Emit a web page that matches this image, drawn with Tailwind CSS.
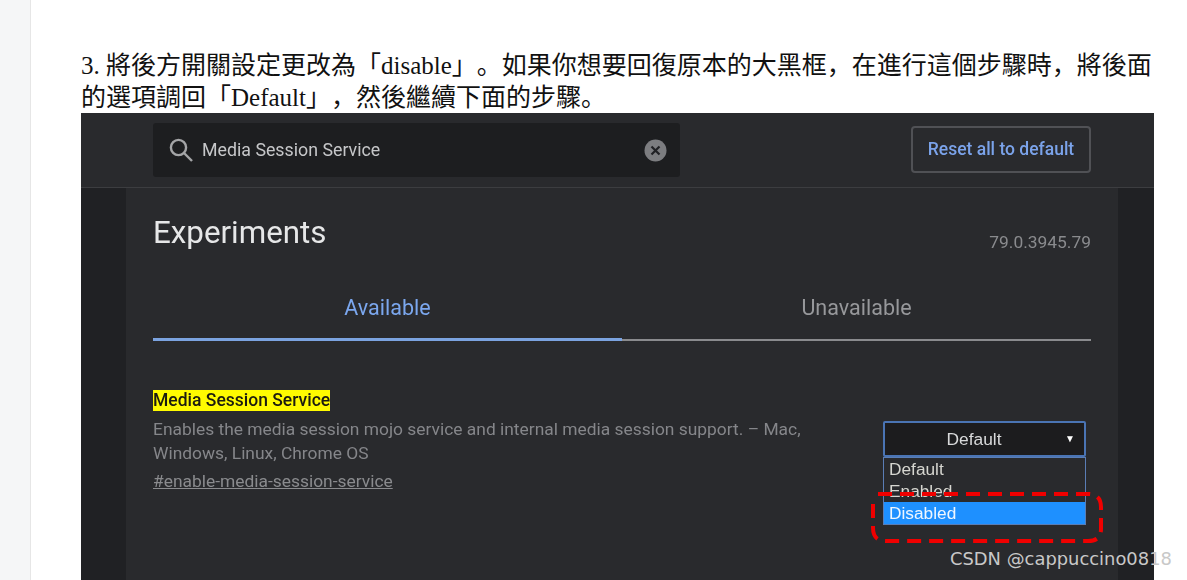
<!DOCTYPE html>
<html lang="zh-Hant">
<head>
<meta charset="utf-8">
<script src="https://cdn.jsdelivr.net/npm/@tailwindcss/browser@4"></script>
</head>
<body class="bg-white">
<div class="relative flex h-[580px] w-[1187px] overflow-hidden bg-white">
  <aside class="h-full w-[31px] shrink-0 border-r border-[#e6e6e6] bg-[#f5f6f7]"></aside>
  <main class="flex w-[1123px] flex-col pl-[50px] pt-[50px]">
    <p lang="zh-CN" class="whitespace-nowrap text-[25px] leading-[32px] text-[#111] [text-spacing-trim:space-all] [font-family:'Liberation_Serif','Noto_Sans_CJK_SC',serif]">3. 將後方開關設定更改為「disable」。如果你想要回復原本的大黑框，在進行這個步驟時，將後面<br>的選項調回「Default」，然後繼續下面的步驟。</p>
    <section class="-mt-[1px] flex h-[467px] w-[1073px] shrink-0 flex-col overflow-hidden bg-[#202124] [font-family:Roboto,sans-serif]">
      <div class="flex h-full flex-col blur-[0.6px]">
      <header class="flex h-[75px] shrink-0 items-center justify-between border-b border-[#3c3d40] bg-[#292a2d] pl-[72px] pr-[63px]">
        <div class="flex h-[54px] w-[527px] items-center rounded-[3px] bg-[#1d1e20] pl-[15px] pr-[13px]">
          <svg class="h-[26px] w-[26px] shrink-0" viewBox="0 0 26 26" fill="none" stroke="#a4a5a7" stroke-width="2.4"><circle cx="10.5" cy="10.5" r="7.6"/><path d="M16 16l8 8"/></svg>
          <span class="ml-[8px] text-[17.8px] text-[#c6c7c9]">Media Session Service</span>
          <svg class="ml-auto h-[23px] w-[23px]" viewBox="0 0 23 23"><circle cx="11.5" cy="11.5" r="11" fill="#7c7d80"/><path d="M7.5 7.5l8 8M15.5 7.5l-8 8" stroke="#202124" stroke-width="2.2"/></svg>
        </div>
        <button class="flex h-[47px] w-[180px] -translate-y-[1px] items-center justify-center rounded-[4px] border-2 border-[#505155] text-[17.5px] font-medium text-[#7ba3ea]">Reset all to default</button>
      </header>
      <div class="ml-[45px] mr-[36px] flex-1 bg-[#292a2d] pl-[27px] pr-[27px]">
        <div class="flex items-end justify-between pt-[26px]">
          <h1 class="text-[31.3px] leading-[38px] text-[#e6e7e8]">Experiments</h1>
          <span class="text-[17.4px] leading-[20px] text-[#8a8b8e]">79.0.3945.79</span>
        </div>
        <nav class="mt-[35px] flex w-[938px]">
          <div class="flex h-[54px] w-[469px] items-start justify-center border-b-[3px] border-[#7ba3e0] pt-[7px] text-[21.5px] leading-[28px] text-[#7ba7ee]">Available</div>
          <div class="flex h-[54px] w-[469px] items-start justify-center border-b-2 border-[#8a8b8e] pt-[7px] text-[21.5px] leading-[28px] text-[#97989b]">Unavailable</div>
        </nav>
        <div class="mt-[48px] flex w-[938px] justify-between">
          <div class="w-[680px]">
            <span class="inline-block h-[21px] bg-[#fffb00] text-[17.5px] leading-[21px] font-medium text-[#1c1c10]">Media Session Service</span>
            <p class="mt-[4px] text-[17.4px] leading-[24px] text-[#85868a]">Enables the media session mojo service and internal media session support. – Mac,<br>Windows, Linux, Chrome OS</p>
            <a class="mt-[4px] block text-[17.4px] leading-[24px] text-[#8a8b8e] underline">#enable-media-session-service</a>
          </div>
          <div class="mr-[5px] mt-[32px] w-[203px] [font-family:'Liberation_Sans',sans-serif]">
            <div class="relative flex h-[36px] items-center justify-center rounded-[2px] border-2 border-[#4a74b4] bg-[#1c1c1e] pr-[21px] text-[17.4px] text-[#d8d9da]">Default<span class="absolute right-[9px] top-[8px] text-[10px] text-white">▼</span></div>
            <ul class="border border-[#5a7db5] bg-[#292a2d] text-[17.3px] leading-[22px] text-[#d6d6d0]">
              <li class="h-[22px] pl-[5px]">Default</li>
              <li class="h-[22px] pl-[5px]">Enabled</li>
              <li class="h-[22px] bg-[#1e90ff] pl-[5px] text-[#eef6ff]">Disabled</li>
            </ul>
          </div>
        </div>
      </div>
      </div>
    </section>
  </main>
  <svg class="absolute left-[870px] top-[490px] h-[56px] w-[236px]" viewBox="0 0 236 56" fill="none"><path d="M8 4H218Q231 4 231 17V39Q231 51 218 51H16Q3 51 3 38V12" stroke="#f00000" stroke-width="4" stroke-dasharray="14 8"/></svg>
  <span class="absolute left-[950px] top-[547px] text-[17.9px] leading-[24px] text-[#c8c8c8] [font-family:'DejaVu_Sans',sans-serif]">CSDN @cappuccino0818</span>
</div>
</body>
</html>
